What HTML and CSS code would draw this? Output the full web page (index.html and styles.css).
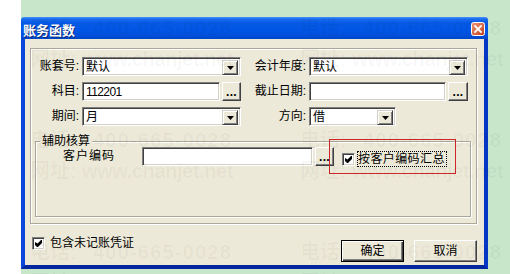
FILE: index.html
```html
<!DOCTYPE html>
<html lang="zh-CN">
<head>
<meta charset="utf-8">
<title>账务函数</title>
<link rel="stylesheet" href="styles.css">
</head>
<body>
<div class="screen">
  <div class="strip"></div>
  <div class="desk">
    <div class="dialog">
      <div class="titlebar">
        <span class="title">账务函数</span>
        <svg class="close" width="14" height="14" viewBox="0 0 14 14">
          <defs>
            <linearGradient id="cg" x1="0" y1="0" x2="1" y2="1">
              <stop offset="0" stop-color="#F39A78"/>
              <stop offset="1" stop-color="#C2401C"/>
            </linearGradient>
          </defs>
          <rect x="0.5" y="0.5" width="13" height="13" rx="2" fill="url(#cg)" stroke="#fff"/>
          <path d="M4 4l6 6M10 4l-6 6" stroke="#fff" stroke-width="1.8" stroke-linecap="square"/>
        </svg>
      </div>
      <div class="body">
        <div class="panel">
          <div class="fields">
            <span class="lbl">账套号:</span>
            <div class="combo"><span class="val">默认</span><span class="drop"><svg width="7" height="4" viewBox="0 0 7 4"><path d="M0 0h7L3.5 4z" fill="#000"/></svg></span></div>
            <span class="lbl">会计年度:</span>
            <div class="combo"><span class="val">默认</span><span class="drop"><svg width="7" height="4" viewBox="0 0 7 4"><path d="M0 0h7L3.5 4z" fill="#000"/></svg></span></div>

            <span class="lbl">科目:</span>
            <div class="pick"><div class="edit"><span class="num">112201</span></div><span class="btn dots">...</span></div>
            <span class="lbl">截止日期:</span>
            <div class="pick"><div class="edit"></div><span class="btn dots wide">...</span></div>

            <span class="lbl">期间:</span>
            <div class="combo"><span class="val">月</span><span class="drop"><svg width="7" height="4" viewBox="0 0 7 4"><path d="M0 0h7L3.5 4z" fill="#000"/></svg></span></div>
            <span class="lbl">方向:</span>
            <div class="combo short"><span class="val">借</span><span class="drop"><svg width="7" height="4" viewBox="0 0 7 4"><path d="M0 0h7L3.5 4z" fill="#000"/></svg></span></div>
          </div>
          <div class="group">
            <span class="legend">辅助核算</span>
            <div class="grow">
              <span class="glbl">客户编码</span>
              <div class="edit cust"></div>
              <span class="btn dots">...</span>
              <span class="cb gcb"><svg width="7" height="7" viewBox="0 0 7 7"><path d="M0 2v3l2 2h1l4-4V0h-1L2.5 3.5z" fill="#000"/></svg></span>
              <span class="focus">按客户编码汇总</span>
            </div>
          </div>
        </div>
        <div class="footer">
          <span class="cb fcb"><svg width="7" height="7" viewBox="0 0 7 7"><path d="M0 2v3l2 2h1l4-4V0h-1L2.5 3.5z" fill="#000"/></svg></span>
          <span class="flbl">包含未记账凭证</span>
          <div class="actions">
            <span class="btn push def">确定</span>
            <span class="btn push">取消</span>
          </div>
        </div>
      </div>
    </div>
  </div>
  <div class="mark"></div>
  <div class="wm">
    <div class="tile"><div><span class="k1">电话:</span><span class="v1">400-665-0028</span></div><div class="l2"><span class="k2">网址:</span><span class="v2">www.chanjet.net</span></div></div>
    <div class="tile"><div><span class="k1">电话:</span><span class="v1">400-665-0028</span></div><div class="l2"><span class="k2">网址:</span><span class="v2">www.chanjet.net</span></div></div>
    <div class="tile"><div><span class="k1">电话:</span><span class="v1">400-665-0028</span></div><div class="l2"><span class="k2">网址:</span><span class="v2">www.chanjet.net</span></div></div>
    <div class="tile"><div><span class="k1">电话:</span><span class="v1">400-665-0028</span></div><div class="l2"><span class="k2">网址:</span><span class="v2">www.chanjet.net</span></div></div>
    <div class="tile"><div><span class="k1">电话:</span><span class="v1">400-665-0028</span></div><div class="l2"><span class="k2">网址:</span><span class="v2">www.chanjet.net</span></div></div>
    <div class="tile"><div><span class="k1">电话:</span><span class="v1">400-665-0028</span></div><div class="l2"><span class="k2">网址:</span><span class="v2">www.chanjet.net</span></div></div>
  </div>
</div>
</body>
</html>
```

FILE: styles.css
```css
body {
  margin: 0;
  background: #fff;
}

.screen {
  position: relative;
  width: 510px;
  height: 274px;
  overflow: hidden;
  display: flex;
  font-family: "Liberation Sans", "Noto Sans CJK SC", sans-serif;
  font-size: 12px;
  color: #000;
}

.strip {
  width: 21px;
  background: #fff;
}

.desk {
  flex: 1;
  background: #C7E6CA;
  padding-top: 17px;
}

.dialog {
  width: 467px;
  height: 252px;
  display: flex;
  flex-direction: column;
}

.titlebar {
  height: 22px;
  flex: none;
  display: flex;
  align-items: flex-start;
  justify-content: space-between;
  padding: 0 3px 0 2px;
  background: linear-gradient(#4A93F8 0, #1A6CEE 2px, #0559E4 6px, #0055E5 14px, #004FDA 19px, #0046C4 22px);
  border-radius: 3px 3px 0 0;
}

.title {
  margin-top: 6px;
  color: #fff;
  font-family: "Noto Sans CJK SC", sans-serif;
  font-weight: bold;
  font-size: 13px;
  line-height: 14px;
  text-shadow: 1px 1px 0 #0A2A7A;
}

.close {
  margin-top: 5px;
}

.body {
  flex: 1;
  display: flex;
  flex-direction: column;
  background: #ECE9D8;
  border-style: solid;
  border-width: 0 4px 4px 4px;
  border-color: #0A48DA #0636C6 #03279F #0A48DA;
  padding: 9px 7px 0 5px;
}

.panel {
  height: 176px;
  box-sizing: border-box;
  border: 1px solid #ACA899;
  box-shadow: 1px 1px 0 #fff, inset 1px 1px 0 #fff;
  padding-top: 8px;
}

.fields {
  display: grid;
  grid-template-columns: 51px 159px 68px 159px;
  grid-auto-rows: 19px;
  row-gap: 6px;
}

.lbl {
  text-align: right;
  padding-right: 3px;
  line-height: 19px;
  white-space: nowrap;
}

.combo,
.edit {
  box-sizing: border-box;
  height: 19px;
  border: 1px solid;
  border-color: #808080 #fff #fff #808080;
  box-shadow: inset 1px 1px 0 #404040, inset -1px -1px 0 #D4D0C8;
  background: #fff;
  display: flex;
  padding: 2px;
}

.combo.short {
  width: 87px;
}

.val {
  flex: 1;
  line-height: 15px;
  padding-left: 1px;
}

.num {
  line-height: 15px;
  padding-left: 1px;
  letter-spacing: -0.6px;
}

.drop {
  width: 16px;
  height: 15px;
  box-sizing: border-box;
  background: #ECE9D8;
  border: 1px solid;
  border-color: #D4D0C8 #404040 #404040 #D4D0C8;
  box-shadow: inset 1px 1px 0 #fff, inset -1px -1px 0 #808080;
  display: flex;
  align-items: center;
  justify-content: center;
}

.drop svg {
  display: block;
  margin-top: 1px;
}

.pick {
  display: flex;
  gap: 2px;
}

.pick .edit {
  flex: 1;
}

.btn {
  box-sizing: border-box;
  background: #ECE9D8;
  border: 1px solid;
  border-color: #fff #404040 #404040 #fff;
  box-shadow: inset -1px -1px 0 #808080;
  display: flex;
  justify-content: center;
}

.dots {
  width: 19px;
  height: 19px;
  flex: none;
  align-items: flex-end;
  font-weight: bold;
  font-size: 12px;
  line-height: 12px;
  padding-bottom: 2px;
  letter-spacing: 0.3px;
}

.dots.wide {
  width: 20px;
}

.group {
  position: relative;
  margin: 15px 0 0 4px;
  width: 436px;
  height: 76px;
  box-sizing: border-box;
  border: 1px solid #ACA899;
  box-shadow: 1px 1px 0 #fff, inset 1px 1px 0 #fff;
}

.legend {
  position: absolute;
  top: -8px;
  left: 4px;
  padding: 0 2px;
  background: #ECE9D8;
  line-height: 14px;
}

.grow {
  display: flex;
  align-items: flex-start;
  padding-top: 5px;
}

.glbl {
  width: 106px;
  box-sizing: border-box;
  padding-left: 27px;
  line-height: 19px;
  letter-spacing: 1px;
}

.edit.cust {
  width: 171px;
  margin-right: 2px;
}

.cb {
  width: 13px;
  height: 13px;
  box-sizing: border-box;
  border: 1px solid;
  border-color: #808080 #fff #fff #808080;
  box-shadow: inset 1px 1px 0 #404040, inset -1px -1px 0 #D4D0C8;
  background: #fff;
  display: flex;
  align-items: center;
  justify-content: center;
  flex: none;
}

.cb svg {
  display: block;
}

.gcb {
  margin: 6px 0 0 8px;
}

.focus {
  margin: 4px 0 0 2px;
  border: 1px dotted #000;
  line-height: 14px;
  padding: 0 1px 0 0;
  letter-spacing: 0.4px;
}

.footer {
  display: flex;
  align-items: flex-start;
}

.fcb {
  margin: 13px 0 0 2px;
}

.flbl {
  margin: 12px 0 0 5px;
  line-height: 14px;
}

.actions {
  margin: 16px 0 0 auto;
  display: flex;
  gap: 10px;
}

.push {
  width: 63px;
  height: 22px;
  align-items: center;
  line-height: 14px;
}

.push.def {
  border-color: #000;
  box-shadow: inset 1px 1px 0 #fff, inset -1px -1px 0 #404040, inset -2px -2px 0 #808080;
}

.mark {
  position: absolute;
  left: 329px;
  top: 139px;
  width: 127px;
  height: 35px;
  box-sizing: border-box;
  border: 1px solid #D0262A;
}

.wm {
  position: absolute;
  inset: 0;
  pointer-events: none;
  display: grid;
  grid-template-columns: repeat(2, 270px);
  grid-auto-rows: 112px;
  padding: 18px 0 0 30px;
  color: rgba(0, 0, 0, 0.035);
  font-family: "Liberation Sans", "Noto Sans CJK SC", sans-serif;
  font-weight: bold;
  font-size: 20px;
  line-height: 20px;
  white-space: nowrap;
}

.tile .l2 {
  margin-top: 11px;
}

.k1 {
  display: inline-block;
  width: 63px;
}

.k2 {
  display: inline-block;
  width: 52px;
}

.v1 {
  letter-spacing: 1.2px;
}

.v2 {
  letter-spacing: -0.4px;
}
```
